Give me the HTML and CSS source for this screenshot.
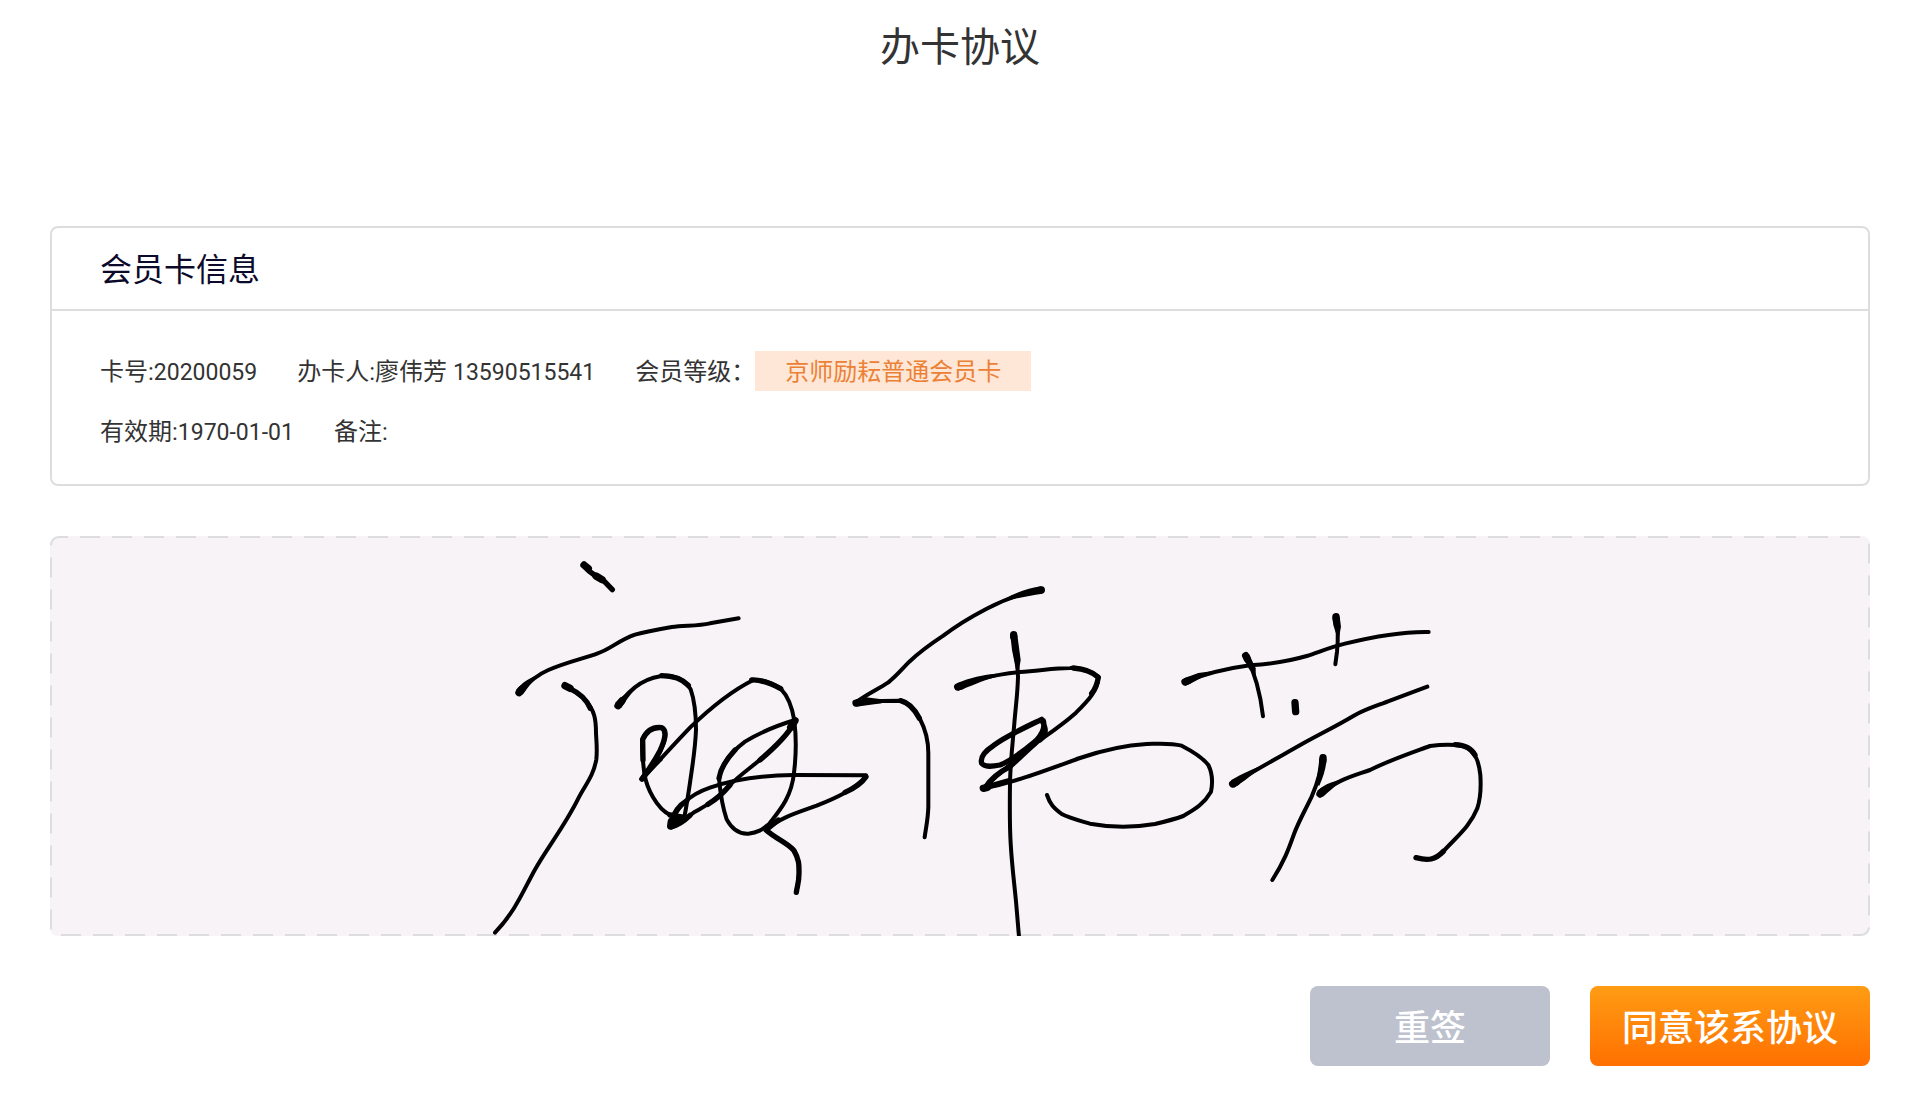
FILE: index.html
```html
<!DOCTYPE html>
<html lang="zh-CN">
<head>
<meta charset="utf-8">
<meta name="viewport" content="width=device-width, initial-scale=1">
<title>办卡协议</title>
<link rel="stylesheet" href="styles.css">
</head>
<body>
<header class="page-header">
  <h1 class="page-title">办卡协议</h1>
</header>
<main class="content">
  <section class="card">
    <h2 class="card-title">会员卡信息</h2>
    <div class="card-body">
      <div class="info-row">
        <span>卡号:<span class="num">20200059</span></span>
        <span>办卡人:廖伟芳 <span class="num">13590515541</span></span>
        <span class="level">会员等级：<span class="tag">京师励耘普通会员卡</span></span>
      </div>
      <div class="info-row">
        <span>有效期:<span class="num">1970-01-01</span></span>
        <span>备注:</span>
      </div>
    </div>
  </section>

  <section class="sign-pad" aria-label="签名">
    <svg class="pad-frame" aria-hidden="true">
      <rect class="pad-outline" x="1" y="1" rx="8" ry="8"/>
    </svg>
    <svg class="signature" viewBox="0 0 5460 1200" role="img" aria-label="廖伟芳">
      <!-- 廖 -->
      <g transform="translate(1290 -18)">
        <path class="thick" d="M312 105L325 116"/>
        <path class="bold" d="M312 107Q325 124 342 134Q356 146 368 149L397 179"/>
        <path class="thick" d="M348 138L366 149"/>
        <path d="M118 487C145 457 172 434 205 420C260 396 310 386 353 370C392 357 414 332 465 314C500 304 535 298 575 291C615 286 655 288 690 280L776 265"/>
        <path class="fill" d="M108 480C125 461 142 446 178 433C157 453 142 476 128 494Z"/>
        <path class="thick" d="M117 488L127 476"/>
        <path d="M255 467C282 482 302 493 317 512C344 542 348 568 348 610C350 645 352 660 349 688C340 740 315 765 295 805C253 890 200 955 163 1022C128 1086 107 1142 45 1208"/>
        <path class="thick" d="M255 467L270 475"/>
        <path class="bold" d="M268 475C302 490 320 510 331 535"/>
        <path d="M414 526C450 475 500 438 562 437C595 440 620 455 632 478C645 515 648 555 648 600C646 650 640 690 634 730C627 780 621 820 613 862"/>
        <path class="fill" d="M405 519C423 500 445 485 470 475C450 492 438 514 423 535Z"/>
        <path class="thick" d="M414 527L426 512"/>
        <path class="bold" d="M545 437Q598 438 625 466"/>
        <path class="bold" d="M613 862L570 855"/>
        <path d="M570 855C530 835 500 775 493 730C488 690 485 660 487 628C500 600 520 590 545 593C565 602 555 635 540 665C525 695 508 715 486 747"/>
        <path class="bold" d="M489 690L488 628C500 602 520 590 545 593C563 602 553 635 540 662C520 700 505 720 486 747"/>
        <path d="M486 747C535 695 580 645 630 593C690 535 760 480 820 450C855 448 880 462 902 476C930 505 938 540 943 572C950 630 948 680 942 728C935 800 900 840 870 878"/>
        <path class="bold" d="M486 747C502 726 520 705 540 688M815 450Q850 448 902 476"/>
        <path d="M945 570C880 590 835 610 795 635C755 665 725 705 717 745C722 800 727 830 740 868C760 905 785 912 805 911C840 907 850 895 867 882"/>
        <path class="bold" d="M765 660C735 692 721 720 717 745"/>
        <path class="thick" d="M945 572L932 592"/>
        <path class="bold" d="M938 586C915 625 875 660 840 690"/>
        <path d="M850 681C810 715 780 735 750 765C705 815 680 825 645 845C620 862 600 885 574 892"/>
        <path class="bold" d="M750 765C725 795 705 810 684 823M630 856Q600 885 574 890"/>
        <path class="thick" d="M572 888L574 874L608 866"/>
        <path d="M572 888C590 820 640 790 690 773C770 745 860 736 940 735L1158 736"/>
        <path class="bold" d="M572 880C580 850 595 827 620 812M1158 740Q1140 767 1095 787"/>
        <path d="M1158 741C1120 780 1070 803 1010 827C955 847 900 862 858 900"/>
        <path class="bold" d="M895 870L858 900C890 928 925 940 942 962C958 990 957 1005 957 1030C957 1060 951 1070 949 1087"/>
      </g>
      <!-- 伟 -->
      <g transform="translate(2370 72)">
        <path d="M604 90C550 98 500 115 440 146C390 172 350 196 310 227C275 250 240 275 208 305C185 328 170 347 145 367C115 387 85 400 55 422"/>
        <path class="fill" d="M495 116C530 96 570 84 604 79L607 101C570 106 530 115 495 123Z"/>
        <path class="thick" d="M604 90L597 91"/>
        <path d="M48 429L125 423L180 422C207 425 225 450 240 477C260 515 265 545 265 580L265 740C264 780 258 800 254 832"/>
        <path class="fill" d="M48 418L78 412L125 418L125 430L48 440Z"/>
        <path class="thick" d="M48 429L60 427"/>
        <path class="bold" d="M182 422C207 428 225 450 238 475"/>
        <path d="M521 225C526 270 533 310 534 350C533 400 527 440 523 490C517 560 511 610 510 670C509 740 509 800 512 850C516 920 523 970 528 1025C533 1080 535 1110 538 1140"/>
        <path class="fill" d="M511 225H532L542 300L537 330H528L516 270Z"/>
        <path class="thick" d="M521 224V230"/>
        <path d="M353 381C410 355 470 343 540 336C600 332 645 324 690 324C725 323 755 335 775 350C775 390 745 422 708 458C670 492 640 512 600 540C555 580 490 625 432 685"/>
        <path class="fill" d="M350 370C390 353 430 343 470 341L470 350C430 360 390 380 354 392Z"/>
        <path class="thick" d="M353 381L363 378"/>
        <path class="bold" d="M700 324Q750 328 775 352Q770 382 755 400"/>
        <path class="bold" d="M600 540C625 520 615 500 605 478C560 500 500 527 460 557C432 575 420 592 425 610C435 622 455 620 480 615C520 600 560 565 590 540Q618 510 610 482"/>
        <path class="bold" d="M585 550L510 620Q460 645 436 682L508 662"/>
        <path class="thick" d="M430 685L442 682"/>
        <path d="M432 685C530 665 620 630 720 594C790 570 850 556 920 552C960 551 990 548 1025 557C1060 575 1090 595 1105 615C1120 645 1118 670 1113 695C1090 735 1060 750 1030 768C1000 779 975 785 945 792C880 803 820 804 750 791C720 782 690 775 665 762C640 743 630 732 621 705"/>
      </g>
      <!-- 芳 -->
      <g transform="translate(3330 162)">
        <path d="M75 276C150 245 210 234 270 226C330 222 385 214 440 198C480 185 510 172 555 161C640 140 720 124 806 126"/>
        <path class="fill" d="M72 265L115 249L165 242C135 253 105 277 76 287Z"/>
        <path class="thick" d="M75 276L85 272"/>
        <path d="M258 197C280 240 300 300 309 379"/>
        <path class="fill" d="M248 200L267 192L287 235L287 262L267 237Z"/>
        <path class="thick" d="M257 197L262 207"/>
        <path d="M528 80C537 125 534 155 531 185L526 223"/>
        <path class="fill" d="M517 80H539L543 110L538 137H530L520 105Z"/>
        <path class="thick" d="M528 80L529 90M405 338L407 365"/>
        <path d="M218 582C300 532 360 500 430 460C480 432 530 408 580 378C620 355 655 346 690 332L802 290"/>
        <path class="fill" d="M213 571C245 552 275 537 320 522C285 546 250 577 222 593Z"/>
        <path class="thick" d="M218 582L229 576"/>
        <path d="M489 504C480 555 465 605 440 650C425 680 412 705 402 732C385 780 372 815 337 870"/>
        <path class="fill" d="M478 505L500 506C498 535 490 560 478 587L468 584C472 550 476 530 478 505Z"/>
        <path class="thick" d="M489 503L488 515"/>
        <path d="M480 611C530 570 580 558 630 540C690 510 750 490 810 468C850 463 880 463 910 468C950 485 957 520 961 555C964 600 960 630 952 655C930 710 890 740 850 784C825 810 805 812 768 803"/>
        <path class="fill" d="M471 603C495 582 525 570 560 568C530 580 510 604 488 621Z"/>
        <path class="thick" d="M480 612L488 604"/>
        <path class="bold" d="M885 464Q930 466 945 495M850 784C825 810 805 813 768 803"/>
      </g>
    </svg>
  </section>

  <div class="actions">
    <button type="button" class="btn btn-reset">重签</button>
    <button type="button" class="btn btn-agree">同意该系协议</button>
  </div>
</main>
</body>
</html>
```
FILE: styles.css
```css
* {
  box-sizing: border-box;
}

body {
  margin: 0;
  background: #fff;
  color: #333;
  font-family: Roboto, "Noto Sans CJK SC", sans-serif;
  font-size: 24px;
  line-height: 42px;
}

.page-header {
  padding: 18px 50px 14px;
  text-align: center;
}

.page-title {
  margin: 0;
  font-size: 40px;
  font-weight: 400;
  line-height: 60px;
}

.content {
  display: flex;
  flex-direction: column;
  gap: 50px;
  padding: 134px 50px 50px;
}

.card {
  border: 2px solid #ddd;
  border-radius: 8px;
}

.card-title {
  margin: 0;
  padding: 18px 48px 15px;
  border-bottom: 2px solid #ddd;
  color: #0b0a2a;
  font-size: 32px;
  font-weight: 400;
  line-height: 48px;
}

.card-body {
  display: flex;
  flex-direction: column;
  gap: 18px;
  padding: 40px 48px 31px;
}

.info-row {
  display: flex;
  flex-wrap: wrap;
  column-gap: 40px;
}

.num {
  font-size: 23px;
  line-height: 1;
}

.level {
  display: flex;
}

.tag {
  height: 40px;
  padding: 0 30px;
  background: #fee7d6;
  color: #ec8136;
}

.sign-pad {
  display: grid;
  height: 400px;
  border-radius: 8px;
  background: #f7f3f7;
  overflow: hidden;
}

.pad-frame,
.signature {
  grid-area: 1 / 1;
  width: 100%;
  height: 400px;
}

.pad-outline {
  width: calc(100% - 2px);
  height: calc(100% - 2px);
  fill: none;
  stroke: #ddd;
  stroke-width: 2px;
  stroke-dasharray: 20 12;
  stroke-dashoffset: 11px;
}

.signature path {
  fill: none;
  stroke: #000;
  stroke-width: 12px;
  stroke-linecap: round;
  stroke-linejoin: round;
}

.signature .bold {
  stroke-width: 16px;
}

.signature .thick {
  stroke-width: 22px;
}

.signature .fill {
  fill: #000;
  stroke: none;
}

.actions {
  display: flex;
  justify-content: flex-end;
  gap: 40px;
}

.btn {
  height: 80px;
  padding: 6px 0 0;
  border: 0;
  border-radius: 8px;
  color: #fff;
  font-family: inherit;
  font-size: 36px;
  font-weight: 500;
  line-height: 74px;
}

.btn-reset {
  width: 240px;
  background: #bec2ce;
}

.btn-agree {
  width: 280px;
  background: linear-gradient(#ff9c14, #ff7000);
}
```
